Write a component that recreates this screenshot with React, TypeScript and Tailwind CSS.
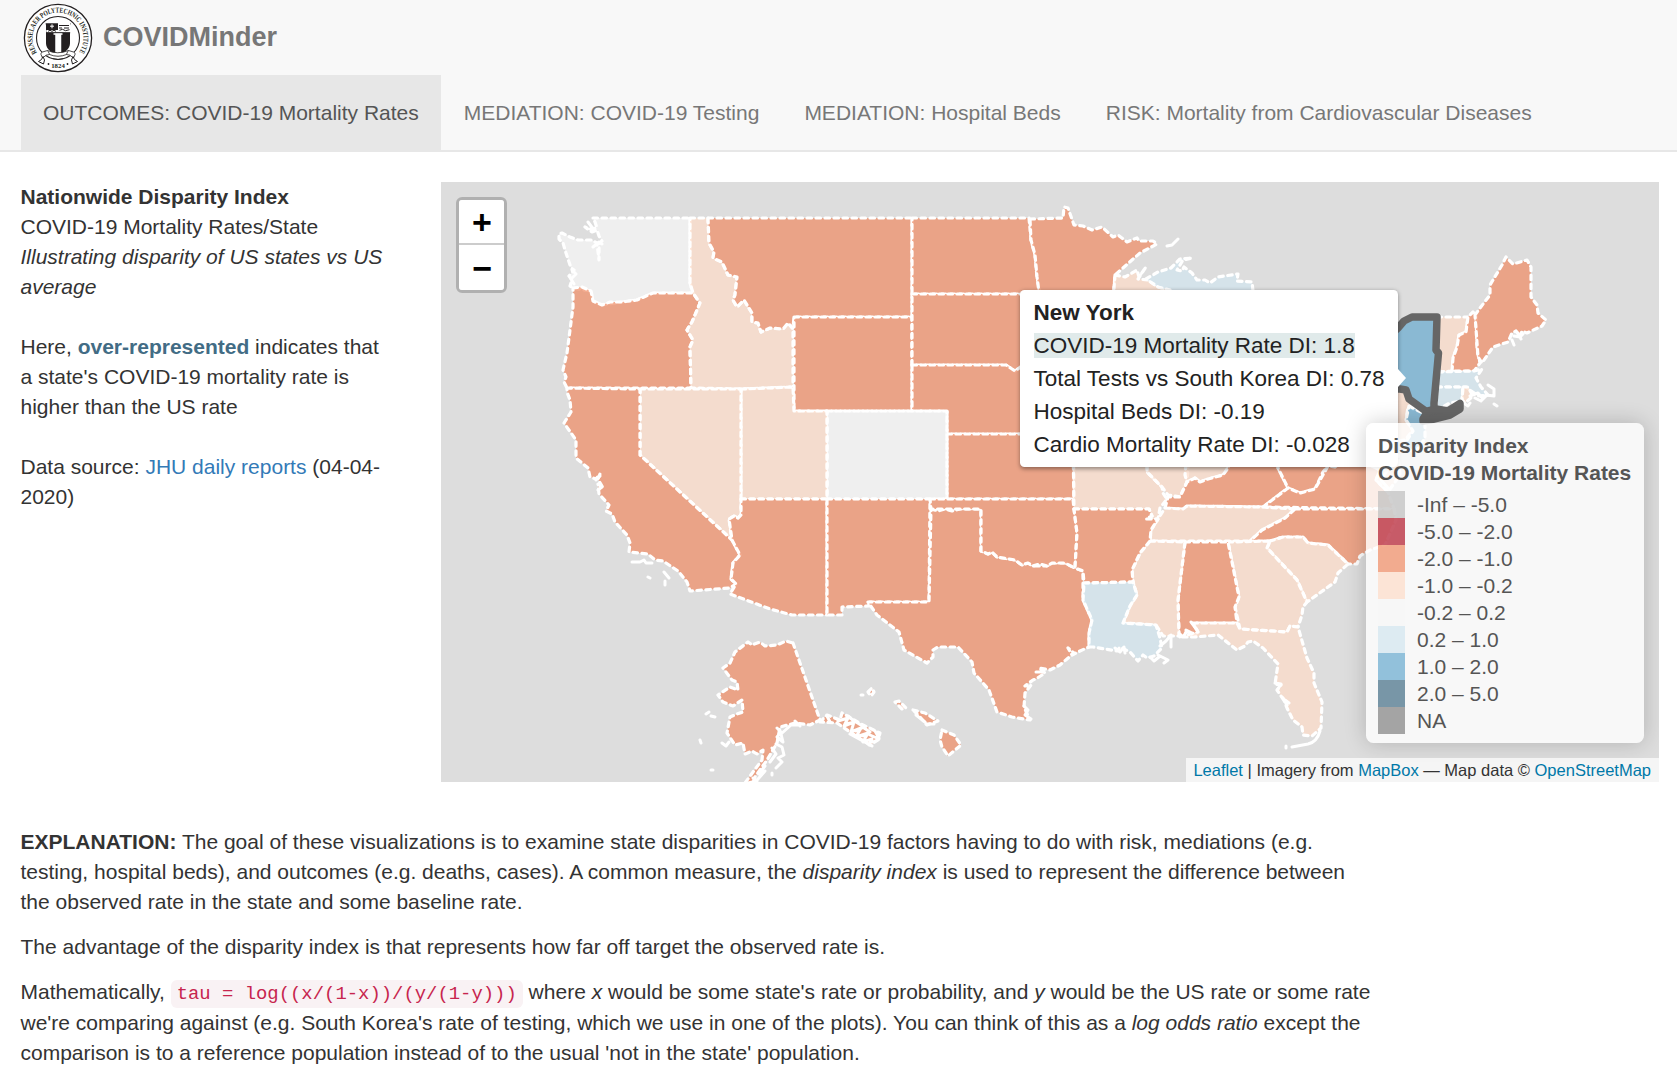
import React from "react";

const ORANGE = "#ef8a62";
const PEACH = "#fddbc7";
const PALE = "#d1e5f0";
const GREY = "#f7f7f7";
const BLUE = "#67a9cf";

type Shape = [fill: string, points: string];

const STATES: Shape[] = [
  // Washington
  [GREY, "593,218 690,218 690,283 693,293 653,293 637,300 622,302 602,305 593,301 591,291 573,288 570,286 572,280 569,276 574,270 571,268 566,253 563,243 559,239 559,234 562,233 570,237 578,240 592,240 597,243 599,260 599,243 602,241 599,236 597,230 592,232 585,227 590,229 597,228 595,222"],
  // Oregon
  [ORANGE, "573,288 582,287 591,291 593,301 602,305 610,302 622,302 637,300 653,293 693,293 700,303 695,315 692,322 687,330 693,340 690,347 691,388 567,388 564,382 566,377 563,370 567,353 570,330 573,307"],
  // Idaho
  [PEACH, "690,218 708,218 709,243 714,252 713,258 722,262 728,275 737,277 735,295 733,300 737,307 744,300 752,313 752,322 758,323 761,332 770,328 783,329 788,323 793,329 793,387 741,389 691,388 690,347 693,340 687,330 692,322 695,315 700,303 693,293 690,283"],
  // Montana
  [ORANGE, "708,218 912,218 912,317 794,317 793,328 788,323 783,329 770,328 761,332 758,323 752,322 752,313 744,300 737,307 733,300 735,295 737,277 728,275 722,262 713,258 714,252 709,243"],
  // Wyoming
  [ORANGE, "794,317 912,317 912,411 794,411"],
  // North Dakota
  [ORANGE, "912,218 1029,218 1031,240 1035,255 1037,277 1039,288 1040,294 912,294"],
  // South Dakota
  [ORANGE, "912,294 1060,294 1060,372 1022,366 1015,371 1006,365 912,365"],
  // Nebraska
  [ORANGE, "912,365 1006,365 1015,371 1022,366 1060,372 1066,434 947,434 947,411 912,411"],
  // Kansas
  [ORANGE, "947,434 1066,434 1074,445 1074,499 947,499"],
  // Colorado
  [GREY, "827,411 947,411 947,499 827,499"],
  // Utah
  [PEACH, "741,389 793,387 794,411 827,411 827,499 741,499"],
  // Nevada
  [PEACH, "640,389 741,389 741,515 738,518 734,516 729,519 732,540 640,455"],
  // California
  [ORANGE, "567,388 640,389 640,455 732,540 740,555 733,563 731,579 736,584 730,588 690,591 687,582 678,571 663,561 655,560 648,554 629,552 630,543 627,535 615,522 612,514 606,511 609,505 599,494 598,484 603,488 598,479 600,474 596,479 590,477 588,468 576,458 576,440 564,423 571,412 570,400 567,392"],
  // Arizona
  [ORANGE, "741,499 827,499 827,615 792,615 770,609 730,594 736,584 731,579 733,563 740,555 732,540 729,519 734,516 738,518 741,515"],
  // New Mexico
  [ORANGE, "827,499 930,499 929,602 868,602 869,606 842,607 842,615 827,615"],
  // Texas
  [ORANGE, "931,509 938,511 945,509 952,511 960,509 981,509 981,551 988,554 992,552 997,557 1015,560 1022,565 1028,563 1033,566 1047,566 1052,563 1065,563 1075,568 1083,571 1083,600 1092,620 1089,633 1089,647 1080,651 1072,655 1068,648 1074,653 1067,659 1060,665 1050,670 1039,668 1045,673 1036,679 1033,680 1025,686 1031,685 1025,693 1024,707 1030,720 1012,717 997,712 989,690 974,673 972,662 958,647 938,647 933,650 933,657 927,663 904,650 899,632 877,615 870,605 868,602 929,602"],
  // Oklahoma
  [ORANGE, "930,499 1073,499 1074,509 1077,533 1075,568 1065,563 1052,563 1047,566 1040,564 1033,566 1028,563 1022,565 1015,560 997,557 992,552 988,554 981,551 981,509 931,509"],
  // Missouri
  [PEACH, "1073,440 1148,440 1147,472 1162,487 1163,493 1167,499 1160,508 1158,519 1146,519 1152,516 1149,509 1074,509"],
  // Illinois
  [PEACH, "1148,440 1188,440 1188,468 1187,482 1180,497 1168,495 1162,487 1147,472"],
  // Indiana
  [PEACH, "1188,440 1240,440 1228,468 1223,475 1208,479 1200,482 1195,478 1187,482 1185,475"],
  // Kentucky
  [ORANGE, "1240,440 1278,455 1278,468 1288,488 1263,507 1187,506 1183,509 1165,508 1168,497 1180,497 1187,482 1195,478 1200,482 1208,479 1223,475 1228,468"],
  // West Virginia
  [ORANGE, "1278,440 1328,440 1328,466 1323,472 1315,489 1300,493 1288,488 1278,468"],
  // Virginia
  [ORANGE, "1263,507 1288,488 1300,493 1315,489 1328,466 1335,467 1350,455 1380,470 1376,480 1388,492 1394,509"],
  // Maryland and Delaware
  [PEACH, "1350,455 1398,455 1400,475 1388,492 1376,480 1380,470"],
  // Tennessee
  [PEACH, "1165,508 1183,509 1187,506 1263,507 1295,509 1285,518 1262,530 1250,541 1150,541 1151,530 1158,519"],
  // North Carolina
  [ORANGE, "1295,509 1394,509 1396,520 1385,545 1370,550 1360,556 1357,564 1348,564 1328,545 1308,543 1303,537 1283,537 1270,541 1250,541 1262,530 1285,518"],
  // South Carolina
  [PEACH, "1270,541 1283,537 1303,537 1308,543 1328,545 1348,564 1338,573 1335,582 1307,602 1297,580 1267,548"],
  // Georgia
  [PEACH, "1228,542 1270,541 1267,548 1297,580 1307,602 1303,607 1302,615 1298,627 1290,626 1287,632 1240,629 1235,607 1239,597"],
  // Alabama
  [ORANGE, "1185,542 1228,542 1239,597 1235,607 1237,623 1193,623 1198,632 1192,637 1187,630 1184,636 1179,634 1178,600"],
  // Mississippi
  [PEACH, "1150,541 1185,542 1178,600 1179,636 1163,636 1156,625 1123,623 1130,606 1137,595 1133,582 1132,570 1140,553"],
  // Arkansas
  [ORANGE, "1074,509 1149,509 1152,516 1146,519 1158,519 1151,530 1150,541 1140,553 1132,570 1133,582 1084,583 1083,571 1075,568 1077,533"],
  // Louisiana
  [PALE, "1084,583 1133,582 1137,595 1130,606 1123,623 1156,625 1160,638 1162,648 1154,656 1147,658 1143,655 1138,661 1130,652 1120,647 1117,651 1093,647 1089,647 1089,633 1092,620 1083,600"],
  // Florida
  [PEACH, "1193,623 1237,623 1240,629 1287,632 1290,626 1298,627 1307,658 1314,673 1314,683 1322,702 1321,728 1312,736 1303,735 1302,727 1293,720 1287,708 1283,698 1287,705 1277,690 1281,685 1275,684 1278,664 1263,648 1253,641 1248,642 1245,646 1237,650 1218,635 1195,637 1179,637 1198,632"],
  // Minnesota
  [ORANGE, "1030,219 1063,218 1064,207 1068,208 1074,225 1083,226 1092,230 1102,227 1113,237 1118,235 1127,242 1137,238 1139,241 1153,241 1157,244 1140,253 1115,275 1113,300 1040,300 1037,277 1035,255 1031,240"],
  // Wisconsin
  [PEACH, "1115,275 1125,277 1137,270 1139,277 1146,267 1138,279 1148,280 1158,287 1170,290 1170,300 1113,300"],
  // Michigan, upper peninsula
  [PALE, "1146,279 1158,272 1171,268 1180,259 1192,258 1183,260 1177,270 1182,271 1184,267 1192,273 1197,280 1205,280 1210,283 1218,277 1238,274 1237,281 1252,282 1254,300 1170,300 1170,290 1158,287"],
  // Pennsylvania
  [PEACH, "1340,389 1405,390 1408,398 1420,412 1408,407 1406,420 1413,430 1405,440 1340,450"],
  // New Jersey
  [BLUE, "1409,406 1425,414 1425,438 1415,453 1403,446 1413,431 1406,420"],
  // Vermont
  [PEACH, "1437,317 1468,317 1466,332 1459,335 1457,347 1453,358 1452,371 1440,372 1438,353"],
  // New Hampshire
  [ORANGE, "1452,371 1453,358 1457,347 1459,335 1466,332 1468,317 1473,312 1476,315 1477,350 1480,363 1474,371"],
  // Maine
  [ORANGE, "1475,315 1480,308 1490,295 1490,285 1502,265 1506,257 1513,264 1527,260 1531,267 1531,297 1537,305 1538,313 1546,320 1542,326 1527,333 1522,331 1520,337 1516,331 1512,333 1508,342 1493,347 1482,363 1478,357"],
  // Massachusetts
  [PALE, "1438,372 1474,371 1482,369 1476,378 1481,387 1488,395 1478,396 1466,387 1437,387"],
  // Connecticut
  [PALE, "1437,387 1463,387 1462,401 1450,403 1436,410"],
  // Rhode Island
  [PEACH, "1463,387 1468,387 1473,396 1465,403 1462,400"],
  // Alaska
  [ORANGE, "793,643 820,720 810,725 795,723 780,727 777,743 767,760 755,777 752,786 745,783 753,772 762,760 763,750 757,754 752,751 745,754 743,743 735,745 727,733 730,717 737,714 743,712 742,700 733,706 723,702 718,695 730,687 738,690 737,682 732,680 723,668 730,663 735,652 748,642 752,645 760,642 765,646 777,645 786,641"],
  // Alaska panhandle
  [ORANGE, "820,722 827,715 840,720 842,713 863,725 880,733 878,740 870,745 850,732 837,723"],
  // Hawaii
  [ORANGE, "895,702 899,701 906,708 902,709"],
  [ORANGE, "913,710 925,713 938,721 927,725 919,716"],
  [ORANGE, "942,730 954,735 961,745 948,756 942,747 940,740"],
  [ORANGE, "868,692 872,688 874,692 871,696"],
];

// Islands and ragged coast drawn as open strokes
const COAST =
  "M632 562h8l4-2 2 3h6 M648 577l2 1 M664 572l5 6 M665 581v4 M1167 246l5-1 6-6 M1320 731q-3 11-12 13l-16 3 M1286 746v2 " +
  "M1488 385l6 4v7l-8-1-5 6-6-3 M1494 404l3 2 M1470 396l8-3 5 6 4-4 M1462 402l6 4 2-3 M1512 340l2 5 M1514 336l6 1 3-3 M1518 333l3 6 " +
  "M1160 646l6-5 5-6v12 M1158 655l10 5-4 3 M1150 657l4 4 5-4 M1115 648l5 4 4-5 1 6 " +
  "M706 714l3-2 M711 716l4 1 M700 740l1 3 M711 770h2 M722 743l4 3 3-4 M861 695h2 M926 724l8 0 M916 715l9 7 " +
  "M795 721l5 5 M777 728l4 4-4 5 6 5-2-8 10-9 8 0 M776 744l6 3 2 8-6 3 4 4-6 6 M772 748l4 6-6 8 M765 766l-6 8 6-3-7 8 M753 778l4 3-9 2 M772 773v2 " +
  "M838 721l10-3-4 8 10-4-3 10 10-4-5 9 12-4-5 9 9-3-3 6 M848 716l7 6-9 2 M856 722l8 5-8 4 M864 728l6 4-7 4 M870 735l9 4-6 3 M850 734l22 12 M875 731l4 7 M827 716l3 6 " +
  "M572 270l4 4-5 5 3 5 M593 247l6-5 3 2 M588 222l6 8 M596 480l4-4 M598 490l4-3 " +
  "M1275 683l6 1-3 5 M1285 700l4 3 M1024 706l4 4-3 5 6 4 M1036 672l7 0 M1186 630l6 3 M1191 622l6 8 M1384 448l-6 5 6 6-5 7 8 5-6 9 7 8";

const TABS = [
  "OUTCOMES: COVID-19 Mortality Rates",
  "MEDIATION: COVID-19 Testing",
  "MEDIATION: Hospital Beds",
  "RISK: Mortality from Cardiovascular Diseases",
];

const LEGEND = [
  ["bg-[#bebebe]", "-Inf – -5.0"],
  ["bg-[#b2182b]", "-5.0 – -2.0"],
  ["bg-[#ef8a62]", "-2.0 – -1.0"],
  ["bg-[#fddbc7]", "-1.0 – -0.2"],
  ["bg-[#f7f7f7]", "-0.2 – 0.2"],
  ["bg-[#d1e5f0]", "0.2 – 1.0"],
  ["bg-[#67a9cf]", "1.0 – 2.0"],
  ["bg-[#426c85]", "2.0 – 5.0"],
  ["bg-[#808080]", "NA"],
];

function Seal() {
  return (
    <svg className="block h-[70px] w-[70px] shrink-0" viewBox="0 0 70 70">
      <defs>
        <path id="seal-top" d="M14.1 49.600A25.500 25.500 0 1 1 55.900 49.600" />
      </defs>
      <circle cx="35" cy="35" r="33.6" fill="#fff" stroke="#231f20" strokeWidth="1.3" />
      <circle cx="35" cy="35" r="21.5" fill="#fff" stroke="#231f20" strokeWidth="1.1" />
      <text fontFamily="Liberation Serif, serif" fontSize="7.400" fontWeight="bold" fill="#231f20">
        <textPath href="#seal-top" textLength="110" lengthAdjust="spacingAndGlyphs">
          RENSSELAER POLYTECHNIC INSTITUTE
        </textPath>
      </text>
      <path d="M22.6 20.2h25.2l-.8 2v18c0 6-5.5 9-12 13-6.500-4-12-7-12-13v-18z" fill="#231f20" />
      <path d="M35 20h12.200v9.500H23.300V27H35z" fill="#fff" />
      <path d="M23 29.800h24.200M36 22.500h10M36 25h3m2 0h5M36.500 27.300l3-1 3 1.400 4-1M25 28.300l2-1 2 1 2-1 2 1" stroke="#231f20" strokeWidth="1" fill="none" />
      <path d="M29 21.300v4M27 23.200h4" stroke="#fff" strokeWidth="1" />
      <path d="M32 30.500h6.500v22H32z" fill="#fff" stroke="#231f20" strokeWidth=".5" />
      <path d="M30.500 31h9" stroke="#fff" strokeWidth="1.600" />
      <path d="M18 51.500q-1-1 1.500-2.500l5-1.500q10 4.500 21 0l5 1.500q2.500 1.500 1.500 2.500l-1.500 3.500q-4-4-7-3.500-8.500 3.500-17 0-3-.5-7 3.500z" fill="#fff" stroke="#231f20" strokeWidth=".8" />
      <path d="M24.500 47.500q2 3 2 4m19-4q-2 3-2 4M30 55.500q5 1.800 10 0" stroke="#231f20" strokeWidth=".8" fill="none" />
      <path d="M15.500 58.500l3-2 1.500-3 1.500 3.500-1 4zM54.500 58.500l-3-2-1.500-3-1.500 3.500 1 4z" fill="#fff" stroke="#231f20" strokeWidth="1" />
      <text x="35" y="64.600" textAnchor="middle" fontFamily="Liberation Serif, serif" fontSize="6.800" fontWeight="bold" fill="#231f20">
        1824
      </text>
      <circle cx="25.500" cy="61" r=".9" fill="#231f20" />
      <circle cx="44.500" cy="61" r=".9" fill="#231f20" />
    </svg>
  );
}

function StateMap() {
  return (
    <svg className="block h-[600px] w-[1218px]" viewBox="441 182 1218 600">
      <g stroke="#fff" strokeWidth="3.2" strokeLinecap="round" strokeLinejoin="round" strokeDasharray="4.5 4.5" fillOpacity="0.7">
        {STATES.map(([fill, points], i) => (
          <polygon key={i} points={points} fill={fill} />
        ))}
      </g>
      <path d={COAST} fill="none" stroke="#fff" strokeWidth="3" strokeLinecap="round" strokeLinejoin="round" />
      <g stroke="#666" strokeWidth="7.5" strokeLinejoin="round" strokeLinecap="round">
        <path
          d="M1340 389L1340 360L1385 340L1398 328L1404 321L1412 317L1437 317L1436 350L1438.500 353L1434 403L1434 410L1427 412L1409 399L1406 390L1400 389Z"
          fill={BLUE}
          fillOpacity="0.7"
        />
        <path d="M1423 419L1428 411L1436 409L1448 411L1460 403.500V409L1450 415L1430 420L1423 421Z" fill="#666" />
      </g>
    </svg>
  );
}

export default function App() {
  return (
    <div className="h-[1087px] w-[1677px] overflow-hidden bg-white font-['Liberation_Sans',Arial,sans-serif] text-[21px] leading-[30px] text-[#333]">
      <header className="h-[152px] border-b-2 border-[#e7e7e7] bg-[#f8f8f8]">
        <div className="flex h-[75px] items-center pl-[23px] text-[27px] font-bold text-[#777]">
          <Seal />
          <span className="ml-[10px] -mt-[2px]">COVIDMinder</span>
        </div>
        <nav className="flex h-[75px] pl-[20.5px]">
          {TABS.map((tab, i) => (
            <a
              key={tab}
              className={
                i === 0
                  ? "flex items-center whitespace-nowrap bg-[#e7e7e7] px-[22.5px] text-[#555]"
                  : "flex items-center whitespace-nowrap px-[22.5px] text-[#777]"
              }
            >
              {tab}
            </a>
          ))}
        </nav>
      </header>

      <main className="flex pt-[30px]">
        <aside className="w-[441px] pl-[20.5px] whitespace-nowrap">
          <b>Nationwide Disparity Index</b>
          <br />
          COVID-19 Mortality Rates/State
          <br />
          <i>
            Illustrating disparity of US states vs US
            <br />
            average
          </i>
          <p className="mt-[30px]">
            Here, <b className="text-[#426c85]">over-represented</b> indicates that
            <br />
            a state's COVID-19 mortality rate is
            <br />
            higher than the US rate
          </p>
          <p className="mt-[30px]">
            Data source: <a className="text-[#337ab7]">JHU daily reports</a> (04-04-
            <br />
            2020)
          </p>
        </aside>

        <section className="relative h-[600px] w-[1218px] overflow-hidden bg-[#ddd]">
          <StateMap />

          <div className="absolute left-[15px] top-[15px] w-[51px] rounded-[6px] border-[3px] border-black/20 bg-clip-padding text-center font-['Liberation_Mono',monospace] text-[34px] font-bold text-black">
            <div className="h-[45px] rounded-t-[3px] border-b-2 border-[#ccc] bg-white pl-[1px] leading-[51px]">+</div>
            <div className="h-[45px] rounded-b-[3px] bg-white pl-[1px] leading-[52px]">−</div>
          </div>

          <div className="absolute left-[579px] top-[108px] h-[177px] w-[378px] whitespace-nowrap rounded-[4.5px] bg-white pl-[13.5px] pt-[6px] text-[22.5px] leading-[33px] text-[#222] shadow-[0_1.5px_4.5px_rgba(0,0,0,0.4)]">
            <b>New York</b>
            <br />
            <span className="bg-[#e0eaea]">COVID-19 Mortality Rate DI: 1.8</span>
            <br />
            Total Tests vs South Korea DI: 0.78
            <br />
            Hospital Beds DI: -0.19
            <br />
            Cardio Mortality Rate DI: -0.028
            <i className="absolute left-[378px] top-[79px] border-y-[9px] border-l-[8px] border-y-transparent border-l-white" />
          </div>

          <div className="absolute left-[925px] top-[241px] h-[320px] w-[278px] whitespace-nowrap rounded-[7.5px] bg-white/80 px-[12px] pt-[9px] leading-[27px] text-[#555] shadow-[0_0_22.5px_rgba(0,0,0,0.2)]">
            <div className="mb-[5px] font-bold">
              Disparity Index
              <br />
              COVID-19 Mortality Rates
            </div>
            {LEGEND.map(([color, label]) => (
              <div key={label} className="flex h-[27px]">
                <span className={`${color} mr-[12px] h-[27px] w-[27px] opacity-70`} />
                {label}
              </div>
            ))}
          </div>

          <div className="absolute bottom-0 right-0 h-[24px] whitespace-nowrap bg-white/70 pl-[7.5px] pr-[8px] text-[16.5px] leading-[24px] text-[#333]">
            <a className="text-[#0078a8]">Leaflet</a> | Imagery from <a className="text-[#0078a8]">MapBox</a> — Map data ©{" "}
            <a className="text-[#0078a8]">OpenStreetMap</a>
          </div>
        </section>
      </main>

      <article className="mt-[45px] flex flex-col gap-[15px] whitespace-nowrap pl-[20.5px]">
        <p>
          <b>EXPLANATION:</b> The goal of these visualizations is to examine state disparities in COVID-19 factors having to do with risk, mediations (e.g.
          <br />
          testing, hospital beds), and outcomes (e.g. deaths, cases). A common measure, the <i>disparity index</i> is used to represent the difference between
          <br />
          the observed rate in the state and some baseline rate.
        </p>
        <p>The advantage of the disparity index is that represents how far off target the observed rate is.</p>
        <p>
          Mathematically,{" "}
          <code className="rounded-[6px] bg-[#f9f2f4] px-[6px] py-[3px] font-['Liberation_Mono',monospace] text-[18.9px] leading-[28px] text-[#c7254e]">
            tau = log((x/(1-x))/(y/(1-y)))
          </code>{" "}
          where <i>x</i> would be some state's rate or probability, and <i>y</i> would be the US rate or some rate
          <br />
          we're comparing against (e.g. South Korea's rate of testing, which we use in one of the plots). You can think of this as a <i>log odds ratio</i> except the
          <br />
          comparison is to a reference population instead of to the usual 'not in the state' population.
        </p>
      </article>
    </div>
  );
}
